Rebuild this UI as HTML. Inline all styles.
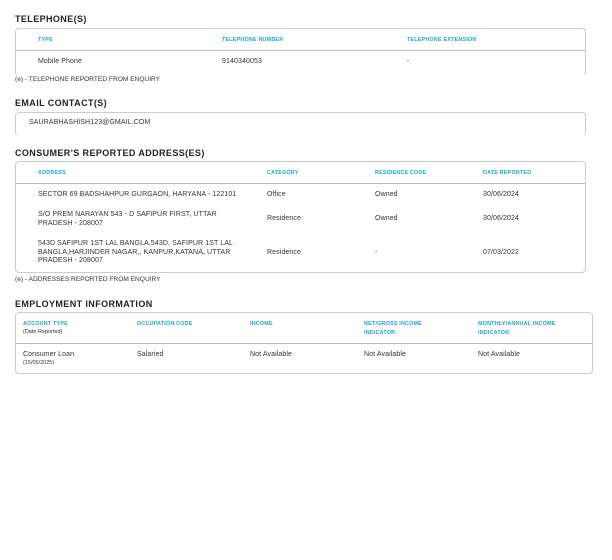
<!DOCTYPE html>
<html><head><meta charset="utf-8"><style>
body{margin:0;width:612px;height:560px;background:#fff;font-family:"Liberation Sans",sans-serif;color:#333;position:relative;overflow:hidden}
.a{position:absolute;white-space:nowrap}
.h{font-size:9px;font-weight:bold;color:#222;letter-spacing:0.4px}
.th{font-size:5.4px;font-weight:bold;color:#1aa6cf;letter-spacing:0.2px;line-height:9px}
.td{font-size:7px;color:#333;line-height:8.6px;letter-spacing:0.1px}
.sm{font-size:5.5px;color:#333}
.fn{font-size:6.6px;color:#333}
.box{position:absolute;border:1px solid #ccc;border-radius:4px}
.div{position:absolute;height:1px;background:#bbb}
</style></head><body>
<div class="a h" style="left:15px;top:14px">TELEPHONE(S)</div>
<div class="box" style="left:15px;top:28px;width:569px;height:46px;border-bottom-color:#fff"></div>
<div class="div" style="left:16px;top:50px;width:569px"></div>
<div class="a th" style="left:38px;top:36px">TYPE</div>
<div class="a th" style="left:222px;top:36px">TELEPHONE NUMBER</div>
<div class="a th" style="left:407px;top:36px">TELEPHONE EXTENSION</div>
<div class="a td" style="left:38px;top:58px">Mobile Phone</div>
<div class="a td" style="left:222px;top:58px">9140340053</div>
<div class="a td" style="left:407px;top:58px">-</div>
<div class="a fn" style="left:15px;top:76px">(e) - TELEPHONE REPORTED FROM ENQUIRY</div>

<div class="a h" style="left:15px;top:98px">EMAIL CONTACT(S)</div>
<div class="box" style="left:15px;top:112px;width:569px;height:22px;border-bottom-color:#fff"></div>
<div class="a td" style="left:29px;top:119px">SAURABHASHISH123@GMAIL.COM</div>

<div class="a h" style="left:15px;top:148px">CONSUMER'S REPORTED ADDRESS(ES)</div>
<div class="box" style="left:15px;top:161px;width:569px;height:110px"></div>
<div class="div" style="left:16px;top:183px;width:569px"></div>
<div class="a th" style="left:38px;top:169px">ADDRESS</div>
<div class="a th" style="left:267px;top:169px">CATEGORY</div>
<div class="a th" style="left:375px;top:169px">RESIDENCE CODE</div>
<div class="a th" style="left:483px;top:169px">DATE REPORTED</div>
<div class="a td" style="left:38px;top:191px">SECTOR 69 BADSHAHPUR GURGAON, HARYANA - 122101</div>
<div class="a td" style="left:267px;top:191px">Office</div>
<div class="a td" style="left:375px;top:191px">Owned</div>
<div class="a td" style="left:483px;top:191px">30/06/2024</div>
<div class="a td" style="left:38px;top:211px">S/O PREM NARAYAN 543 - D SAFIPUR FIRST, UTTAR<br>PRADESH - 208007</div>
<div class="a td" style="left:267px;top:215px">Residence</div>
<div class="a td" style="left:375px;top:215px">Owned</div>
<div class="a td" style="left:483px;top:215px">30/06/2024</div>
<div class="a td" style="left:38px;top:240px">543D SAFIPUR 1ST LAL BANGLA,543D, SAFIPUR 1ST LAL<br>BANGLA,HARJINDER NAGAR,, KANPUR,KATANA, UTTAR<br>PRADESH - 208007</div>
<div class="a td" style="left:267px;top:249px">Residence</div>
<div class="a td" style="left:375px;top:249px">-</div>
<div class="a td" style="left:483px;top:249px">07/03/2022</div>
<div class="a fn" style="left:15px;top:276px">(e) - ADDRESSES REPORTED FROM ENQUIRY</div>

<div class="a h" style="left:15px;top:299px">EMPLOYMENT INFORMATION</div>
<div class="box" style="left:15px;top:312px;width:576px;height:60px"></div>
<div class="div" style="left:16px;top:343px;width:576px"></div>
<div class="a th" style="left:23px;top:320px">ACCOUNT TYPE</div>
<div class="a sm" style="left:23px;top:329px">(Date Reported)</div>
<div class="a th" style="left:137px;top:320px">OCCUPATION CODE</div>
<div class="a th" style="left:250px;top:320px">INCOME</div>
<div class="a th" style="left:364px;top:320px">NET/GROSS INCOME<br>INDICATOR</div>
<div class="a th" style="left:478px;top:320px">MONTHLY/ANNUAL INCOME<br>INDICATOR</div>
<div class="a td" style="left:23px;top:351px">Consumer Loan</div>
<div class="a sm" style="left:23px;top:360px">(15/05/2025)</div>
<div class="a td" style="left:137px;top:351px">Salaried</div>
<div class="a td" style="left:250px;top:351px">Not Available</div>
<div class="a td" style="left:364px;top:351px">Not Available</div>
<div class="a td" style="left:478px;top:351px">Not Available</div>
</body></html>
